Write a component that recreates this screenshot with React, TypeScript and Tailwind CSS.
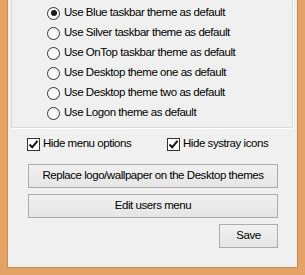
import React, { useState } from 'react';

const THEMES = [
  'Use Blue taskbar theme as default',
  'Use Silver taskbar theme as default',
  'Use OnTop taskbar theme as default',
  'Use Desktop theme one as default',
  'Use Desktop theme two as default',
  'Use Logon theme as default',
];

function Radio({ checked }: { checked: boolean }) {
  return (
    <span className="w-[13px] h-[13px] rounded-full border border-[#333333] bg-gradient-to-b from-[#f4f4f4] to-white flex items-center justify-center shrink-0">
      {checked && <span className="w-[6px] h-[6px] rounded-full bg-[#1a1a1a]" />}
    </span>
  );
}

function Check({ checked }: { checked: boolean }) {
  return (
    <span className="w-[13px] h-[13px] border border-[#333333] bg-white flex items-center justify-center shrink-0">
      {checked && (
        <svg width="11" height="11" viewBox="0 0 11 11">
          <path d="M1.5 5.5 L4.2 8.3 L9.5 1.8" fill="none" stroke="#111" strokeWidth="2" />
        </svg>
      )}
    </span>
  );
}

function WinButton({ children, className }: { children: React.ReactNode; className?: string }) {
  return (
    <button className={`h-[24px] border border-[#acacac] bg-gradient-to-b from-[#f0f0f0] to-[#e5e5e5] text-black flex items-center justify-center ${className ?? ''}`}>
      {children}
    </button>
  );
}

export default function App() {
  const [theme, setTheme] = useState(0);
  const [hideMenu, setHideMenu] = useState(true);
  const [hideTray, setHideTray] = useState(true);

  return (
    <div
      className="w-[305px] h-[275px] bg-[#e4a264] px-[7px] pb-[7px] overflow-hidden text-[11.5px] tracking-[-0.45px] text-black"
      style={{ fontFamily: '"Liberation Sans", Arial, sans-serif' }}
    >
      <div className="h-full bg-[#f0f0f0] border border-t-0 border-[#c98a52] flex flex-col">
        {/* Theme group box */}
        <div className="ml-[3px] mr-[4px] border border-t-0 border-[#dcdcdc] shadow-[1px_1px_0_#ffffff] pt-[3px] pb-[4px] pl-[35px]">
          {THEMES.map((label, i) => (
            <div
              key={label}
              className="h-[20px] flex items-center gap-[4px] cursor-default"
              onClick={() => setTheme(i)}
            >
              <Radio checked={theme === i} />
              <span>{label}</span>
            </div>
          ))}
        </div>

        {/* Options */}
        <div className="flex items-center h-[14px] mt-[9px] pl-[19px]">
          <div className="flex items-center gap-[3px] w-[140px]" onClick={() => setHideMenu(!hideMenu)}>
            <Check checked={hideMenu} />
            <span>Hide menu options</span>
          </div>
          <div className="flex items-center gap-[3px]" onClick={() => setHideTray(!hideTray)}>
            <Check checked={hideTray} />
            <span>Hide systray icons</span>
          </div>
        </div>

        <div className="flex flex-col gap-[6px] pl-[20px] pr-[19px] mt-[13px]">
          <WinButton className="w-full">Replace logo/wallpaper on the Desktop themes</WinButton>
          <WinButton className="w-full">Edit users menu</WinButton>
          <div className="flex justify-end">
            <WinButton className="w-[59px]">Save</WinButton>
          </div>
        </div>
      </div>
    </div>
  );
}
